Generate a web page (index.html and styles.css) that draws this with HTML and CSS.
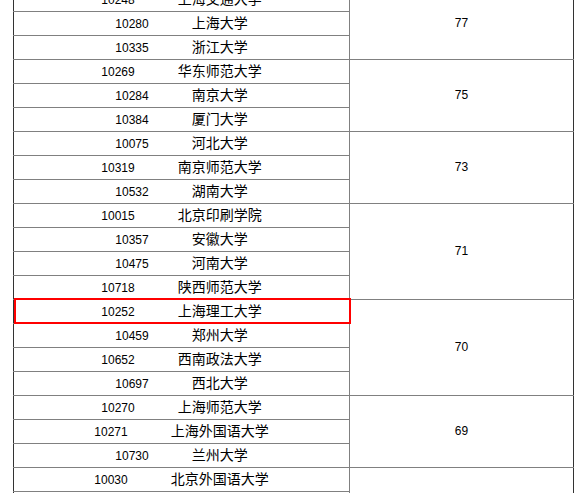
FILE: index.html
```html
<!DOCTYPE html>
<html lang="zh">
<head>
<meta charset="utf-8">
<link rel="stylesheet" href="styles.css">
</head>
<body>
<table class="score">
  <colgroup><col class="c1"><col class="c2"></colgroup>
  <tbody>
    <tr><td><span class="code">10248</span><span class="name">上海交通大学</span></td><td class="sc" rowspan="3">77</td></tr>
    <tr><td><span class="code">10280</span><span class="name">上海大学</span></td></tr>
    <tr><td><span class="code">10335</span><span class="name">浙江大学</span></td></tr>
    <tr><td><span class="code">10269</span><span class="name">华东师范大学</span></td><td class="sc" rowspan="3">75</td></tr>
    <tr><td><span class="code">10284</span><span class="name">南京大学</span></td></tr>
    <tr><td><span class="code">10384</span><span class="name">厦门大学</span></td></tr>
    <tr><td><span class="code">10075</span><span class="name">河北大学</span></td><td class="sc" rowspan="3">73</td></tr>
    <tr><td><span class="code">10319</span><span class="name">南京师范大学</span></td></tr>
    <tr><td><span class="code">10532</span><span class="name">湖南大学</span></td></tr>
    <tr><td><span class="code">10015</span><span class="name">北京印刷学院</span></td><td class="sc" rowspan="4">71</td></tr>
    <tr><td><span class="code">10357</span><span class="name">安徽大学</span></td></tr>
    <tr><td><span class="code">10475</span><span class="name">河南大学</span></td></tr>
    <tr><td><span class="code">10718</span><span class="name">陕西师范大学</span></td></tr>
    <tr><td class="hl"><span class="code">10252</span><span class="name">上海理工大学</span></td><td class="sc" rowspan="4">70</td></tr>
    <tr><td><span class="code">10459</span><span class="name">郑州大学</span></td></tr>
    <tr><td><span class="code">10652</span><span class="name">西南政法大学</span></td></tr>
    <tr><td><span class="code">10697</span><span class="name">西北大学</span></td></tr>
    <tr><td><span class="code">10270</span><span class="name">上海师范大学</span></td><td class="sc" rowspan="3">69</td></tr>
    <tr><td><span class="code">10271</span><span class="name">上海外国语大学</span></td></tr>
    <tr><td><span class="code">10730</span><span class="name">兰州大学</span></td></tr>
    <tr><td><span class="code">10030</span><span class="name">北京外国语大学</span></td><td class="sc" rowspan="4"></td></tr>
    <tr><td></td></tr>
    <tr><td></td></tr>
    <tr><td></td></tr>
  </tbody>
</table>
</body>
</html>
```
FILE: styles.css
```css
html, body {
  margin: 0;
  padding: 0;
  background: #fff;
  overflow: hidden;
}
body {
  font-family: "Liberation Sans", "Noto Sans CJK SC", sans-serif;
  color: #000;
}
.score {
  border-collapse: collapse;
  table-layout: fixed;
  width: 560px;
  margin: -13px 0 0 13px;
  border-left: 1px solid #333;
  border-right: 1px solid #333;
}
.c1 { width: 336px; }
.c2 { width: 224px; }
.score td {
  border: 1px solid #808080;
  height: 22px;
  padding: 0 0 1px;
  text-align: center;
  vertical-align: middle;
  line-height: 16px;
  white-space: nowrap;
}
.score td:first-child { border-left: 1px solid #333; }
.score td.sc { border-right: 1px solid #333; font-size: 12px; }
.code {
  font-size: 12px;
  margin-right: 43px;
}
.name {
  font-family: "Noto Sans CJK SC", sans-serif;
  font-size: 14px;
}
.hl { position: relative; }
.hl::after {
  content: "";
  position: absolute;
  left: 0;
  top: -2px;
  right: -2px;
  bottom: -1px;
  border: 2px solid #f00;
  pointer-events: none;
}
```
